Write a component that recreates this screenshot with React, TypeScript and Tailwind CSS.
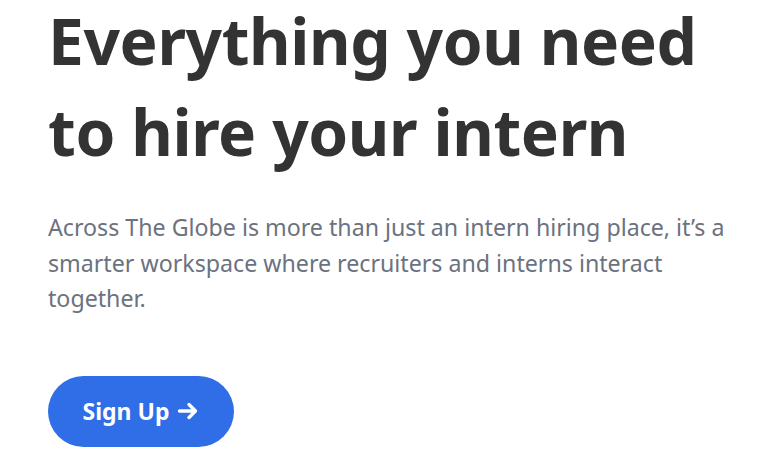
export default function App() {
  return (
    <div
      className="min-h-[467px] bg-white pl-12 pr-2 pt-[1px]"
      style={{ fontFamily: '"Noto Sans", "Open Sans", Arial, sans-serif' }}
    >
      <h1 className="mt-[-6px] text-[64px] font-bold leading-[91px] text-[#333333] tracking-[-0.4px]">
        Everything you need
        <br />
        to hire your intern
      </h1>
      <p className="mt-[33px] max-w-[700px] text-[23.2px] leading-[35.5px] text-[#6b7280]">
        Across The Globe is more than just an intern hiring place, it’s a smarter workspace
        where recruiters and interns interact together.
      </p>
      <button className="mt-[59px] flex h-[71px] w-[186px] items-center justify-center gap-2 rounded-full bg-[#2f6ee6] text-[23px] font-bold text-white">
        Sign Up
        <svg width="22" height="20" viewBox="0 0 22 20" fill="none">
          <path
            d="M2.5 10h16M12 3.5l6.5 6.5-6.5 6.5"
            stroke="white"
            strokeWidth="3.4"
            strokeLinecap="round"
            strokeLinejoin="round"
          />
        </svg>
      </button>
    </div>
  );
}
